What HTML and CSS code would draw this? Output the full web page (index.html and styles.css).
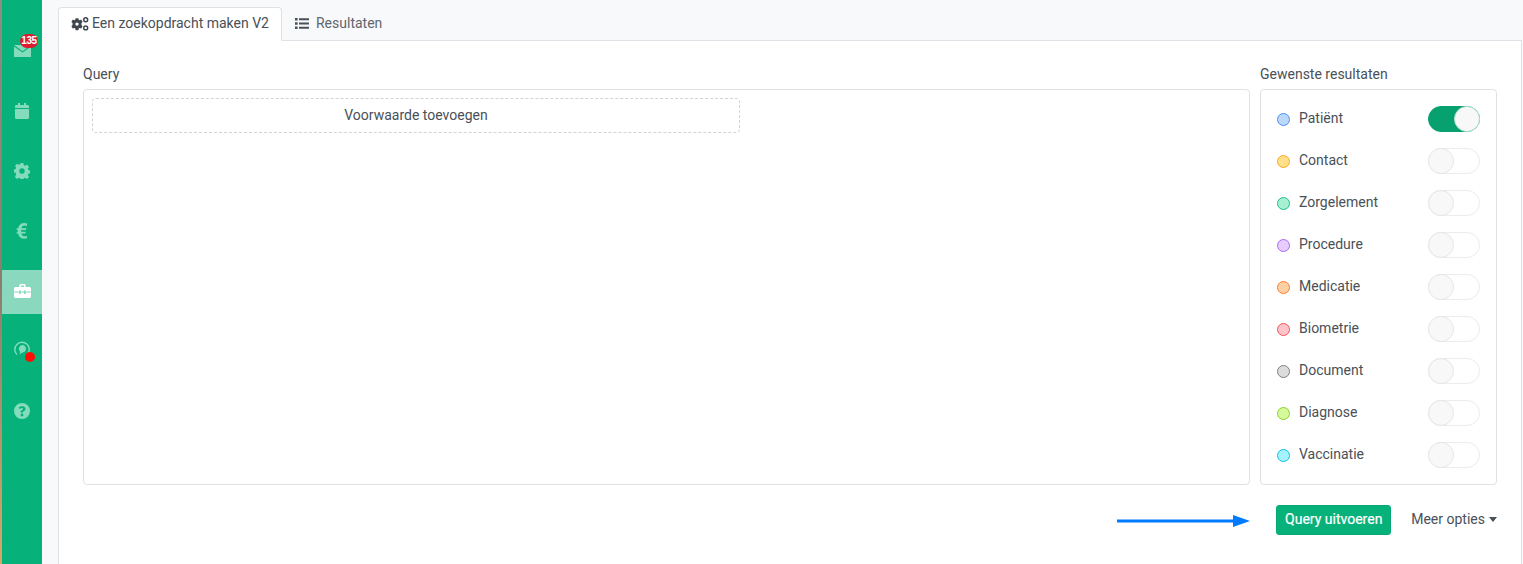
FILE: index.html
```html
<!DOCTYPE html>
<html lang="nl">
<head>
<meta charset="utf-8">
<title>Een zoekopdracht maken V2</title>
<link rel="stylesheet" href="styles.css">
</head>
<body>
<div class="app">
  <div class="edge"></div>
  <nav class="sidebar">
    <a class="nav-item">
      <svg class="nav-icon nav-icon-mail" viewBox="0 0 16 12" preserveAspectRatio="none"><path d="M0 0h16L8 6.200z"/><path d="M0 1.400l8 6.200 8-6.200V12H0z"/></svg>
      <span class="count">135</span>
    </a>
    <a class="nav-item">
      <svg class="nav-icon" viewBox="0 0 16 16"><path d="M1 5V3.500C1 2.700 1.600 2 2.500 2H4V0h2v2h4V0h2v2h1.500c.9 0 1.500.7 1.500 1.500V5zM1 6h14v8.500c0 .8-.6 1.500-1.500 1.500h-11C1.600 16 1 15.300 1 14.500z"/></svg>
    </a>
    <a class="nav-item">
      <svg class="nav-icon" viewBox="0 0 16 16"><path fill-rule="evenodd" d="M6.600 0h2.800l.4 2.200 1.200.6 2-1 2 2.200-1.200 1.800.5 1.200 1.700.5v2.900l-1.700.4-.5 1.200 1.200 1.900-2 2-2-1.100-1.200.5-.4 2.200H6.600l-.4-2.200-1.200-.5-2 1.100-2-2L2.200 11l-.5-1.200L0 9.400V6.500l1.700-.5.5-1.200L1 3 3 .8l2 1 1.200-.6zM8 5.300a2.700 2.700 0 1 0 0 5.400 2.700 2.700 0 0 0 0-5.400z"/></svg>
    </a>
    <a class="nav-item">
      <svg class="nav-icon" viewBox="0 0 12 16"><path d="M11 .5v2.600C10.300 2.700 9.500 2.500 8.700 2.500c-1.700 0-2.900 1-3.300 2.800h4.900l-.4 1.700H5.100v1.700h4.600l-.4 1.700H5.400c.4 1.900 1.700 2.900 3.400 2.900.9 0 1.700-.2 2.200-.6v2.600c-.8.300-1.700.5-2.700.5-3.300 0-5.600-2-6.200-5.400H.5l.4-1.700h.9V7H.5l.4-1.700h1.200C2.800 2 5 0 8.300 0c1 0 2 .2 2.700.5z"/></svg>
    </a>
    <a class="nav-item nav-active">
      <svg class="nav-icon nav-icon-wide" viewBox="0 0 16 14" preserveAspectRatio="none"><path d="M5 3V1.500C5 .7 5.700 0 6.500 0h3c.8 0 1.500.7 1.500 1.500V3h3.500c.8 0 1.500.7 1.500 1.500V7.500h-5V6.500H9.500v1h-3v-1H5v1H0v-3C0 3.700.7 3 1.500 3zM6.500 1.500V3h3V1.500zM0 8.500h5v1.500h1.500V8.500h3V10H11V8.500h5v4c0 .8-.7 1.500-1.500 1.500h-13C.7 14 0 13.300 0 12.500z"/></svg>
    </a>
    <a class="nav-item nav-item-support">
      <svg class="nav-icon" viewBox="0 0 16 16"><path fill="none" stroke-width="1.400" d="M2.800 13.400a7.200 7.200 0 1 1 10.800-.4"/><path d="M8 4a3.900 3.900 0 0 1 3.900 3.900c0 2-1.500 3.500-3.500 3.700l-3 1.900.9-2.600A3.900 3.900 0 0 1 8 4z"/></svg>
      <span class="alert-dot"></span>
    </a>
    <a class="nav-item">
      <svg class="nav-icon" viewBox="0 0 16 16"><path fill-rule="evenodd" d="M8 0a8 8 0 1 1 0 16A8 8 0 0 1 8 0zm-.1 3.200c-1.500 0-2.600.7-3.300 1.800l1.500 1.100c.4-.5.900-1 1.700-1 .6 0 1.200.3 1.200.9 0 .5-.4.7-1 1-.8.500-1.300 1-1.300 2v.4h2.400v-.3c0-.4.300-.6.900-1 .8-.5 1.500-1.100 1.500-2.300 0-1.700-1.700-2.600-2.600-2.600zM8 10.600a1.400 1.400 0 1 0 0 2.800 1.400 1.400 0 0 0 0-2.800z"/></svg>
    </a>
  </nav>
  <main class="main">
    <div class="tabs">
      <div class="tab tab-active">
        <svg class="tab-icon tab-icon-gears" viewBox="0 0 18 14"><path fill-rule="evenodd" d="M4.600 1.200h2.800l.3 1.600 1 .5 1.500-.7 1.400 2.400-1.200 1.100.1 1-.1 1 1.200 1.100-1.400 2.400-1.500-.6-1 .6-.3 1.600H4.600l-.3-1.600-1-.6-1.500.6L.4 9.200l1.200-1.100-.1-1 .1-1L.4 5l1.400-2.400 1.500.7 1-.5zM6 5.400a1.700 1.700 0 1 0 0 3.400 1.700 1.700 0 0 0 0-3.400z"/><path fill-rule="evenodd" d="M14.700 0a2.700 2.700 0 1 1 0 5.400 2.700 2.700 0 0 1 0-5.400zm0 1.500a1.200 1.200 0 1 0 0 2.400 1.200 1.200 0 0 0 0-2.400zM14.700 8.200a2.700 2.700 0 1 1 0 5.400 2.700 2.700 0 0 1 0-5.400zm0 1.500a1.200 1.200 0 1 0 0 2.400 1.200 1.200 0 0 0 0-2.400z"/></svg>
        <span>Een zoekopdracht maken V2</span>
      </div>
      <div class="tab">
        <svg class="tab-icon tab-icon-list" viewBox="0 0 14 11"><path d="M0 0h2.600v2.400H0zM4 .2h10v2H4zM0 4.300h2.600v2.400H0zM4 4.500h10v2H4zM0 8.600h2.600V11H0zM4 8.800h10v2H4z"/></svg>
        <span>Resultaten</span>
      </div>
    </div>
    <section class="panel">
      <div class="columns">
        <div class="query-col">
          <div class="col-label">Query</div>
          <div class="box query-box">
            <div class="add-condition">Voorwaarde toevoegen</div>
          </div>
        </div>
        <div class="results-col">
          <div class="col-label">Gewenste resultaten</div>
          <div class="box results-box">
            <div class="result-row"><span class="dot dot-blue"></span><span class="result-name">Patiënt</span><span class="switch switch-on"><span class="knob"></span></span></div>
            <div class="result-row"><span class="dot dot-yellow"></span><span class="result-name">Contact</span><span class="switch"><span class="knob"></span></span></div>
            <div class="result-row"><span class="dot dot-green"></span><span class="result-name">Zorgelement</span><span class="switch"><span class="knob"></span></span></div>
            <div class="result-row"><span class="dot dot-purple"></span><span class="result-name">Procedure</span><span class="switch"><span class="knob"></span></span></div>
            <div class="result-row"><span class="dot dot-orange"></span><span class="result-name">Medicatie</span><span class="switch"><span class="knob"></span></span></div>
            <div class="result-row"><span class="dot dot-red"></span><span class="result-name">Biometrie</span><span class="switch"><span class="knob"></span></span></div>
            <div class="result-row"><span class="dot dot-gray"></span><span class="result-name">Document</span><span class="switch"><span class="knob"></span></span></div>
            <div class="result-row"><span class="dot dot-lime"></span><span class="result-name">Diagnose</span><span class="switch"><span class="knob"></span></span></div>
            <div class="result-row"><span class="dot dot-cyan"></span><span class="result-name">Vaccinatie</span><span class="switch"><span class="knob"></span></span></div>
          </div>
        </div>
      </div>
      <div class="actions">
        <svg class="arrow" viewBox="0 0 133 12"><path d="M0 4.500h116V0l17 6-17 6V7.500H0z"/></svg>
        <button class="run-btn" type="button">Query uitvoeren</button>
        <span class="more">Meer opties<span class="caret"></span></span>
      </div>
    </section>
  </main>
</div>
</body>
</html>
```

FILE: styles.css
```css
* { box-sizing: border-box; }

html, body {
  margin: 0;
  height: 100%;
  overflow: hidden;
}

body {
  background: #f8f9fa;
  color: #495057;
  font-family: Roboto, "Liberation Sans", sans-serif;
  font-size: 14px;
  line-height: 21px;
}

.app {
  display: flex;
  height: 564px;
}

.edge {
  width: 2px;
  flex: none;
  background: linear-gradient(#8d8d80, #8a7d70 50%, #d9a66a);
}

.sidebar {
  width: 40px;
  flex: none;
  background: #06b279;
  display: flex;
  flex-direction: column;
  gap: 16px;
  padding-top: 30px;
}

.nav-item {
  position: relative;
  height: 44px;
  padding-bottom: 2px;
  display: flex;
  align-items: center;
  justify-content: center;
}

.nav-active {
  background: #8ad9be;
}

.nav-icon {
  width: 16px;
  height: 16px;
  fill: #84dcbd;
  stroke: #84dcbd;
  stroke-width: 0;
}

.nav-active .nav-icon {
  fill: #fff;
}

.nav-icon-mail {
  width: 17px;
  height: 12px;
}

.nav-icon-wide {
  width: 17px;
  height: 14px;
}

.nav-item-support {
  padding-bottom: 6px;
}

.count {
  position: absolute;
  left: 18px;
  top: 4px;
  width: 18px;
  height: 14px;
  border-radius: 7px;
  background: #dc1c2e;
  color: #fff;
  font-family: "Liberation Sans", sans-serif;
  font-size: 10px;
  font-weight: 700;
  letter-spacing: -0.4px;
  line-height: 14px;
  text-align: center;
}

.alert-dot {
  position: absolute;
  left: 23px;
  top: 22px;
  width: 10px;
  height: 10px;
  border-radius: 50%;
  background: #fb0f05;
}

.main {
  flex: 1;
  min-width: 0;
  margin-left: 16px;
  margin-right: 1px;
  padding-top: 7px;
  display: flex;
  flex-direction: column;
}

.tabs {
  display: flex;
  height: 34px;
  flex: none;
  border-bottom: 1px solid #dee2e6;
}

.tab {
  display: flex;
  align-items: center;
  gap: 3px;
  height: 34px;
  padding: 0 12px 1px 12px;
  border: 1px solid transparent;
  border-radius: 4px 4px 0 0;
  color: #5f666d;
}

.tab-active {
  color: #495057;
  background: #fff;
  border-color: #dee2e6 #dee2e6 #fff;
}

.tab-icon {
  flex: none;
  fill: #3f464d;
}

.tab-icon-gears {
  width: 18px;
  height: 14px;
}

.tab-icon-list {
  width: 14px;
  height: 11px;
  margin-right: 4px;
  fill: #495057;
}

.panel {
  flex: 1;
  background: #fff;
  border-left: 1px solid #dee2e6;
  border-right: 1px solid #dee2e6;
  padding: 23px 24px 0;
}

.columns {
  display: flex;
  gap: 10px;
}

.query-col {
  flex: 1;
  min-width: 0;
}

.results-col {
  width: 237px;
  flex: none;
}

.col-label {
  height: 25px;
}

.box {
  height: 396px;
  border: 1px solid #dee2e6;
  border-radius: 4px;
}

.query-box {
  padding: 8px;
}

.add-condition {
  width: 648px;
  height: 35px;
  border: 1px dashed #ced4da;
  border-radius: 4px;
  text-align: center;
  line-height: 32px;
}

.results-box {
  padding: 16px 16px 0;
}

.result-row {
  display: flex;
  align-items: center;
  height: 26px;
  margin-bottom: 16px;
}

.dot {
  flex: none;
  width: 13px;
  height: 13px;
  border: 1px solid;
  border-radius: 50%;
  margin-right: 9px;
}

.dot-blue { background: #bbd9fb; border-color: #4d8ff5; }
.dot-yellow { background: #ffe08a; border-color: #f9a825; }
.dot-green { background: #a7f0d2; border-color: #1fbf88; }
.dot-purple { background: #e6ccff; border-color: #a96bf0; }
.dot-orange { background: #ffd0a3; border-color: #f97d2c; }
.dot-red { background: #ffc4c8; border-color: #ec5560; }
.dot-gray { background: #dcdcdc; border-color: #808080; }
.dot-lime { background: #d6f99d; border-color: #8bd02c; }
.dot-cyan { background: #a5f3fc; border-color: #14bde2; }

.result-name {
  flex: 1;
  margin-bottom: 2px;
}

.switch {
  flex: none;
  width: 52px;
  height: 26px;
  border: 1px solid #ececec;
  border-radius: 13px;
  background: #fff;
  display: flex;
}

.knob {
  width: 26px;
  height: 26px;
  margin: -1px;
  border: 1px solid #e6e6e6;
  border-radius: 50%;
  background: #f8f8f8;
}

.switch-on {
  background: #07a06f;
  border-color: #07a06f;
  justify-content: flex-end;
}

.switch-on .knob {
  border-color: #b5dfd0;
}

.actions {
  display: flex;
  align-items: center;
  margin-top: 20px;
  height: 30px;
  justify-content: flex-end;
}

.arrow {
  width: 133px;
  height: 12px;
  fill: #007bff;
  margin: 2px 26px 0 0;
}

.run-btn {
  width: 115px;
  height: 30px;
  padding: 0 0 2px;
  border: 1px solid #06a973;
  border-radius: 3px;
  background: #06b279;
  color: #fff;
  font: 400 14px/21px Roboto, "Liberation Sans", sans-serif;
  -webkit-text-stroke: 0.2px #fff;
  margin-right: 20px;
}

.more {
  display: flex;
  align-items: center;
  margin-top: -2px;
}

.caret {
  width: 0;
  height: 0;
  margin-left: 4px;
  border-left: 4px solid transparent;
  border-right: 4px solid transparent;
  border-top: 5px solid #495057;
}
```
